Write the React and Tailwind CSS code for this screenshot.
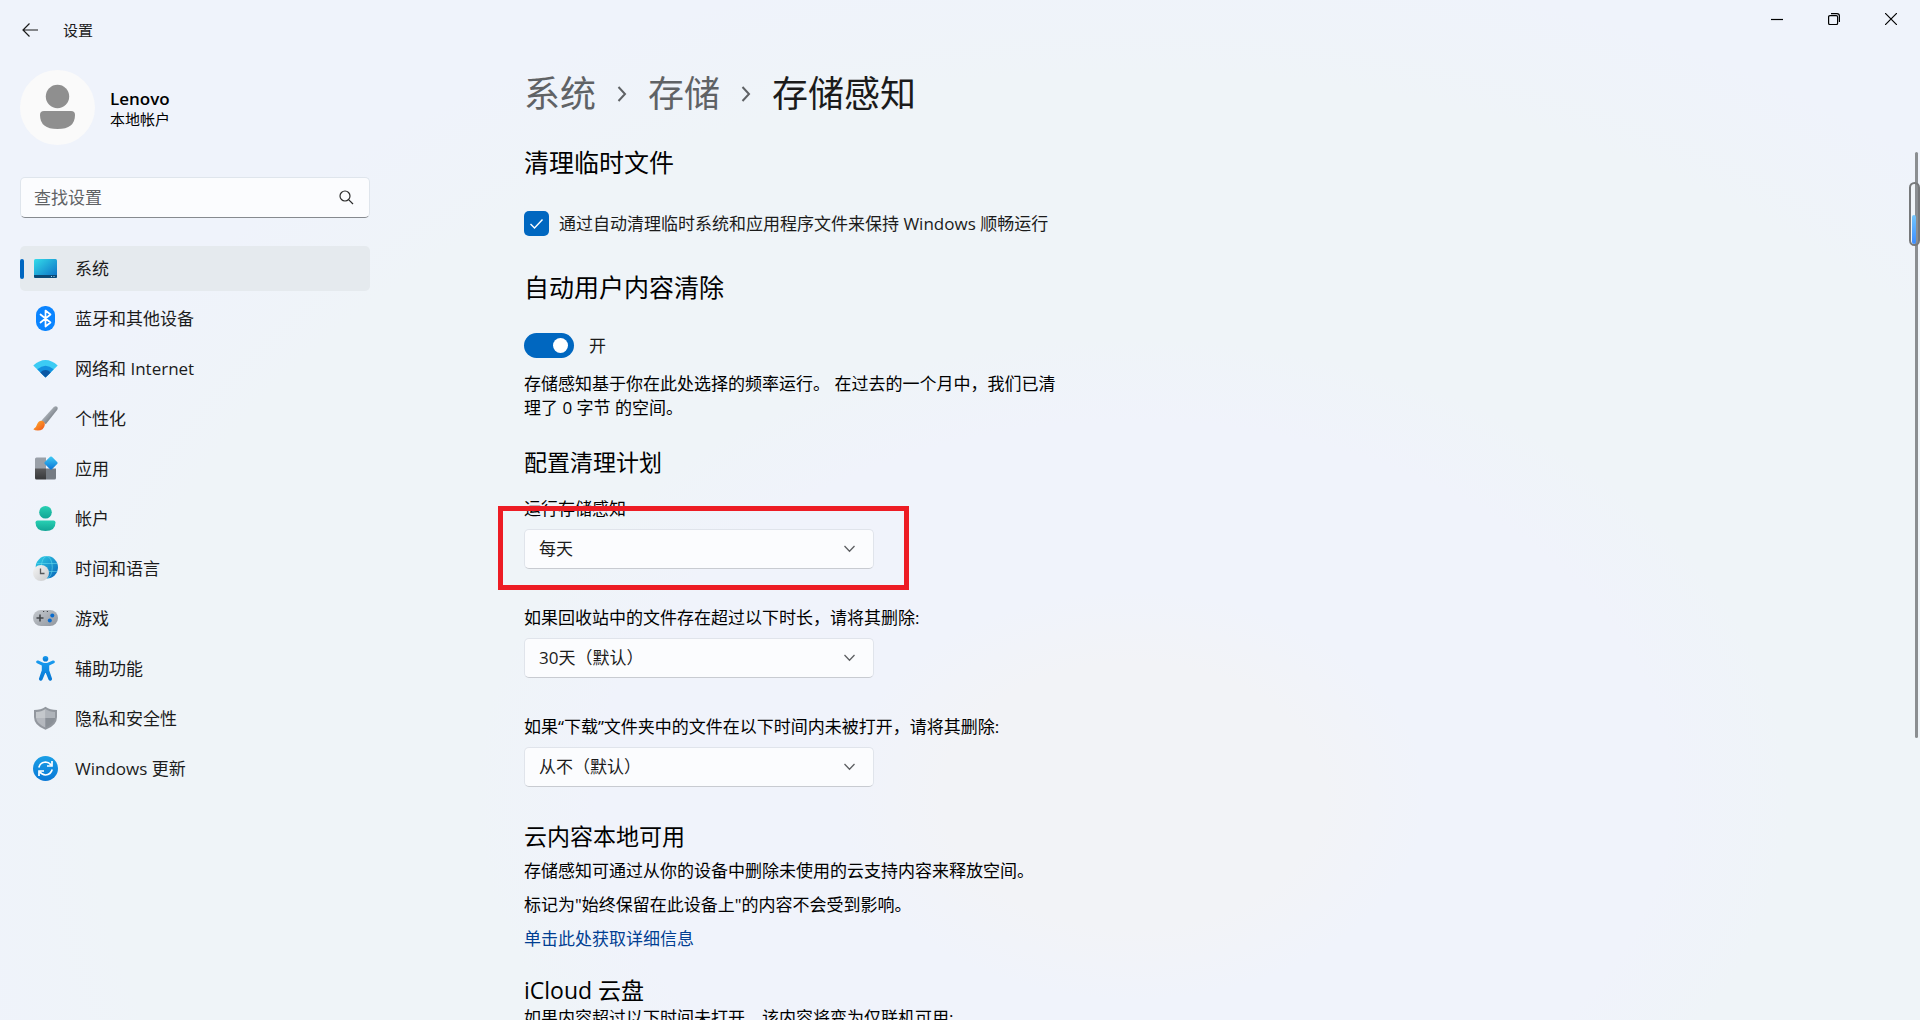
import { useState } from "react";

const SystemIcon = () => (
  <svg width="25" height="25" viewBox="0 0 25 25">
    <defs>
      <linearGradient id="sys" x1="0" y1="0" x2="1" y2="1">
        <stop offset="0" stopColor="#34dcea" />
        <stop offset="1" stopColor="#0a6cc4" />
      </linearGradient>
    </defs>
    <rect x="1" y="3" width="23" height="19" rx="1.500" fill="url(#sys)" />
    <path d="M1 19h23v1.500a1.500 1.500 0 0 1-1.500 1.500h-20a1.500 1.500 0 0 1-1.500-1.500z" fill="#0b4a77" />
    <path d="M18 20.500h1M20.500 20.500h1" stroke="#9fd6f2" />
  </svg>
);

const BluetoothIcon = () => (
  <svg width="25" height="25" viewBox="0 0 25 25">
    <rect x="3" y="0" width="19" height="25" rx="9" fill="#0a84ff" />
    <path d="M7.500 8.500l10 8-5 4V4.500l5 4-10 8" fill="none" stroke="#fff" strokeWidth="1.700" strokeLinejoin="round" strokeLinecap="round" />
  </svg>
);

const WifiIcon = () => (
  <svg width="25" height="25" viewBox="0 0 25 25">
    <path d="M.3 9.500Q12.500-1.500 24.700 9.500L12.500 21.500z" fill="#3ccbf4" />
    <path d="M4.300 13.300Q12.500 6 20.700 13.300L12.500 21.500z" fill="#1490df" />
    <path d="M7.300 16.400Q12.500 11.500 17.700 16.400L12.500 21.500z" fill="#0b57a4" />
  </svg>
);

const BrushIcon = () => (
  <svg width="25" height="25" viewBox="0 0 25 25">
    <defs>
      <linearGradient id="handle" x1="0" y1="0" x2="1" y2="1">
        <stop offset="0.300" stopColor="#b4bac1" />
        <stop offset="0.700" stopColor="#737a82" />
      </linearGradient>
      <linearGradient id="tip" x1="0" y1="0" x2="1" y2="1">
        <stop offset="0" stopColor="#ffb52e" />
        <stop offset="1" stopColor="#f0521c" />
      </linearGradient>
    </defs>
    <path d="M8.500 14.500L20.800 1q2-1.600 3.300-.2 1.200 1.300 0 3.200L12.800 18.300z" fill="url(#handle)" />
    <path d="M4 18.500q1.300-4 4.800-3.800 3.400.8 3 4.300-1 5.500-7 5.500-3 0-4.500-1.300Q3.200 22 4 18.500z" fill="url(#tip)" />
  </svg>
);

const AppsIcon = () => (
  <svg width="25" height="25" viewBox="0 0 25 25">
    <defs>
      <linearGradient id="diamond" x1="0" y1="0" x2="1" y2="1">
        <stop offset="0" stopColor="#42cdf5" />
        <stop offset="1" stopColor="#0871d5" />
      </linearGradient>
      <linearGradient id="dark" x1="0" y1="0" x2="0" y2="1">
        <stop offset="0" stopColor="#59595b" />
        <stop offset="1" stopColor="#37383a" />
      </linearGradient>
    </defs>
    <path d="M3.500 1.500H13V13H2V3q0-1.500 1.500-1.500z" fill="#9aa0a8" />
    <path d="M2 12.500h11v11H3.500Q2 23.500 2 22z" fill="url(#dark)" />
    <path d="M13 12.500h10V22q0 1.500-1.500 1.500H13z" fill="#757b83" />
    <rect x="13" y="2" width="10" height="10" rx="1.300" transform="rotate(45 18 7)" fill="url(#diamond)" />
  </svg>
);

const AccountIcon = () => (
  <svg width="25" height="25" viewBox="0 0 25 25">
    <defs>
      <linearGradient id="acct" x1="0" y1="0" x2="0" y2="1">
        <stop offset="0" stopColor="#28d0b3" />
        <stop offset="1" stopColor="#12a595" />
      </linearGradient>
    </defs>
    <circle cx="12.500" cy="6.300" r="6.300" fill="url(#acct)" />
    <path d="M4.500 14.500h16q2 0 2 2 0 8.500-10 8.500t-10-8.500q0-2 2-2z" fill="url(#acct)" />
  </svg>
);

const TimeIcon = () => (
  <svg width="25" height="25" viewBox="0 0 25 25">
    <defs>
      <linearGradient id="globe" x1="0" y1="0" x2="1" y2="1">
        <stop offset="0" stopColor="#30d1e8" />
        <stop offset="1" stopColor="#0863b8" />
      </linearGradient>
      <linearGradient id="clock" x1="0" y1="0" x2="1" y2="1">
        <stop offset="0" stopColor="#f5f5f5" />
        <stop offset="1" stopColor="#c9cacc" />
      </linearGradient>
    </defs>
    <circle cx="13.800" cy="11.300" r="11.200" fill="url(#globe)" />
    <g fill="none" stroke="#6fe3f2" strokeOpacity="0.500">
      <ellipse cx="13.800" cy="11.300" rx="5.500" ry="11" />
      <path d="M4 7.500h20M4 15.500h20" />
    </g>
    <circle cx="8" cy="17" r="8" fill="url(#clock)" />
    <path d="M7.500 12.500V17.500h4" fill="none" stroke="#55585c" strokeWidth="1.300" />
  </svg>
);

const GameIcon = () => (
  <svg width="25" height="25" viewBox="0 0 25 25">
    <defs>
      <linearGradient id="pad" x1="0" y1="0" x2="1" y2="1">
        <stop offset="0" stopColor="#c5c9ce" />
        <stop offset="1" stopColor="#90969e" />
      </linearGradient>
    </defs>
    <rect x="0" y="4" width="25" height="16" rx="8" fill="url(#pad)" />
    <path d="M7 8.500v7M3.500 12h7" stroke="#44474b" strokeWidth="1.600" />
    <path d="M10 5.500h1.200M13.800 5.500H15" stroke="#44474b" strokeWidth="1.200" />
    <circle cx="19.300" cy="9.500" r="2" fill="#0a6cce" />
    <circle cx="16.800" cy="14.500" r="2" fill="#0a6cce" />
  </svg>
);

const AccessIcon = () => (
  <svg width="25" height="25" viewBox="0 0 25 25">
    <defs>
      <linearGradient id="man" x1="0" y1="0" x2="0" y2="1">
        <stop offset="0" stopColor="#1a9cf0" />
        <stop offset="1" stopColor="#0776d2" />
      </linearGradient>
    </defs>
    <circle cx="12.500" cy="2.800" r="2.800" fill="url(#man)" />
    <path d="M3.300 5.200q.7-1.200 2-.6l5 2.100q2.200.7 4.400 0l5-2.100q1.300-.6 2 .6.500 1.400-.8 2l-4.700 2.200v4.800l2.800 8.300q.3 1.700-1.200 2.300-1.500.3-2.200-1L12.800 17h-.6l-2.800 6.800q-.7 1.300-2.200 1Q5.700 24.200 6 22.500l2.800-8.300V9.400L4.100 7.200q-1.300-.6-.8-2z" fill="url(#man)" />
  </svg>
);

const ShieldIcon = () => (
  <svg width="25" height="25" viewBox="0 0 25 25">
    <path d="M12.500.8Q17 4 24 4v7q0 8.500-11.500 12.800Q1 19.500 1 11V4q7 0 11.500-3.200z" fill="#92979e" />
    <path d="M12.500 3Q16.500 6 22 6v6H12.500z" fill="#afb4ba" />
    <path d="M12.500 3Q8.500 6 3 6v6h9.500z" fill="#c4c8cc" />
    <path d="M3 12h9.500v9.500Q4 18 3 12z" fill="#b4b8be" />
    <path d="M22 12h-9.500v9.500Q21 18 22 12z" fill="#8a9097" />
  </svg>
);

const UpdateIcon = () => (
  <svg width="25" height="25" viewBox="0 0 25 25">
    <defs>
      <linearGradient id="upd" x1="0" y1="0" x2="0" y2="1">
        <stop offset="0" stopColor="#1a9fe6" />
        <stop offset="1" stopColor="#0978d6" />
      </linearGradient>
    </defs>
    <circle cx="12.500" cy="12.500" r="12.500" fill="url(#upd)" />
    <g fill="none" stroke="#fff" strokeWidth="1.700">
      <path d="M5.800 11.500q1.500-5.200 6.700-5.500 3.500.2 5.800 3.300" />
      <path d="M19.200 13.500q-1.500 5.200-6.700 5.500-3.500-.2-5.800-3.300" />
      <path d="M19 5v5h-5M6 20v-5h5" />
    </g>
  </svg>
);

const NAV = [
  { label: "系统", Icon: SystemIcon },
  { label: "蓝牙和其他设备", Icon: BluetoothIcon },
  { label: "网络和 Internet", Icon: WifiIcon },
  { label: "个性化", Icon: BrushIcon },
  { label: "应用", Icon: AppsIcon },
  { label: "帐户", Icon: AccountIcon },
  { label: "时间和语言", Icon: TimeIcon },
  { label: "游戏", Icon: GameIcon },
  { label: "辅助功能", Icon: AccessIcon },
  { label: "隐私和安全性", Icon: ShieldIcon },
  { label: "Windows 更新", Icon: UpdateIcon },
];

function TitleBar() {
  return (
    <header className="flex h-[62px] items-start justify-between">
      <div className="flex h-[60px] items-center pl-[22px]">
        <button type="button" aria-label="返回" className="mr-[25px]">
          <svg width="16" height="14" viewBox="0 0 16 14" fill="none" stroke="#1b1b1b" strokeWidth="1.200">
            <path d="M7.500.5L1 7l6.500 6.500M1 7h15" />
          </svg>
        </button>
        <span className="text-[15px]">设置</span>
      </div>
      <div className="flex h-[38px] pr-px">
        <button type="button" aria-label="最小化" className="flex w-[57px] items-center justify-center">
          <svg width="12" height="12" viewBox="0 0 12 12" stroke="#000" strokeWidth="1.200">
            <path d="M0 6.500h12" />
          </svg>
        </button>
        <button type="button" aria-label="还原" className="flex w-[57px] items-center justify-center">
          <svg width="12" height="12" viewBox="0 0 12 12" fill="none" stroke="#000" strokeWidth="1.200">
            <rect x="0.600" y="2.600" width="9" height="9" rx="1.300" />
            <path d="M3 .6h6q2.400 0 2.400 2.400v6" />
          </svg>
        </button>
        <button type="button" aria-label="关闭" className="flex w-[57px] items-center justify-center">
          <svg width="12" height="12" viewBox="0 0 12 12" stroke="#000" strokeWidth="1.200">
            <path d="M0 0l12 12M12 0L0 12" />
          </svg>
        </button>
      </div>
    </header>
  );
}

function Sidebar() {
  return (
    <aside className="w-[350px] shrink-0">
      <div className="flex items-center gap-[15px]">
        <svg width="75" height="75" viewBox="0 0 75 75">
          <circle cx="37.500" cy="37.500" r="37.500" fill="#fafafa" />
          <circle cx="37.500" cy="26.500" r="11.700" fill="#8f8f8f" />
          <path d="M24 41h27q4 0 4 4 0 14-17.500 14T20 45q0-4 4-4z" fill="#8f8f8f" />
        </svg>
        <div className="pt-[2px]">
          <p className="text-[17px] leading-5 font-semibold text-black">Lenovo</p>
          <p className="text-[15px] leading-5 text-black">本地帐户</p>
        </div>
      </div>

      <div className="relative mt-8">
        <input
          type="text"
          aria-label="查找设置"
          placeholder="查找设置"
          className="block h-[41px] w-full rounded-[5px] border border-[#dfe5ec] border-b-[#868a8f] bg-[#fbfcfe] pr-10 pl-[13px] text-[17px] placeholder:text-[#606265]"
        />
        <svg className="absolute top-[13px] right-4" width="15" height="15" viewBox="0 0 15 15" fill="none" stroke="#2b2b2b" strokeWidth="1.200">
          <circle cx="6" cy="6" r="5" />
          <path d="M9.600 9.600L14 14" />
        </svg>
      </div>

      <nav className="mt-7 flex flex-col gap-[5px]">
        {NAV.map(({ label, Icon }, i) => (
          <a
            key={label}
            href="#"
            className={`relative flex h-[45px] items-center gap-[17px] rounded-[5px] pl-[13px] text-[17px] ${
              i === 0 ? "bg-[#e5eaee]" : ""
            }`}
          >
            {i === 0 && <span className="absolute left-0 h-5 w-1 rounded-full bg-[#0067c0]" />}
            <Icon />
            {label}
          </a>
        ))}
      </nav>
    </aside>
  );
}

function Crumb() {
  return (
    <span className="flex w-[52px] justify-center">
      <svg width="10" height="16" viewBox="0 0 10 16" fill="none" stroke="#5f6265" strokeWidth="2">
        <path d="M1.500 1l6.500 7-6.500 7" />
      </svg>
    </span>
  );
}

function SelectField({ id, label, value, framed }) {
  return (
    <div>
      <label htmlFor={id} className="block w-max text-[17px] leading-6 text-black">
        {label}
      </label>
      <div className="relative mt-2 w-[350px]">
        <select
          id={id}
          className="block h-10 w-full appearance-none rounded-[5px] border border-[#e0e4eb] border-b-[#c8cbd1] bg-[#fbfcfe] pr-10 pl-[14px] text-[17px]"
        >
          <option>{value}</option>
        </select>
        <svg className="pointer-events-none absolute top-4 right-[19px]" width="11" height="8" viewBox="0 0 11 8" fill="none" stroke="#5d5f62" strokeWidth="1.300">
          <path d="M.5 1l5 5.200 5-5.200" />
        </svg>
        {framed && (
          <div className="pointer-events-none absolute -top-[23px] -right-[35px] -bottom-[21px] -left-[26px] border-5 border-[#ed1c24]" />
        )}
      </div>
    </div>
  );
}

function ScrollIndicator() {
  return (
    <div className="absolute top-[152px] right-0 h-[586px] w-[11px]">
      <div className="absolute right-[2px] h-full w-[3px] rounded-full bg-[#8b8e91]" />
      <div className="absolute top-[30px] right-0 flex h-16 w-[11px] items-end rounded-full border-2 border-[#77797b] bg-gradient-to-r from-[#f0f4f8] from-55% to-[#8b8e91] to-60%">
        <div className="ml-px h-[29px] w-1 rounded-sm bg-gradient-to-b from-[#74c6fb] to-[#3c8cff]" />
      </div>
    </div>
  );
}

export default function App() {
  const [autoClean, setAutoClean] = useState(true);
  const [enabled, setEnabled] = useState(true);

  return (
    <div
      lang="zh-CN"
      className="relative h-screen overflow-hidden bg-[#eff3fb] bg-[radial-gradient(90%_118%_at_59%_78%,#f2f3f7_11%,#f0f3fb_17%,#f0f3fb_31%,#eff4f8_38%,#eff4f8_60%,#eff3fb_70%)] font-['Open_Sans','Noto_Sans_CJK_SC',sans-serif] text-[#1b1b1b]"
    >
      <TitleBar />
      <div className="flex gap-[154px] pt-2 pl-5">
        <Sidebar />

        <main className="min-w-0 flex-1">
          <h1 className="flex items-center text-4xl leading-12">
            <a href="#" className="text-[#5f6265]">系统</a>
            <Crumb />
            <a href="#" className="text-[#5f6265]">存储</a>
            <Crumb />
            <span>存储感知</span>
          </h1>

          <h2 className="mt-7 text-[25px] leading-8 text-black">清理临时文件</h2>
          <label className="mt-[33px] flex w-max items-center gap-[10px] text-[17px] leading-6">
            <span className="relative flex">
              <input
                type="checkbox"
                checked={autoClean}
                onChange={(e) => setAutoClean(e.target.checked)}
                className="size-[25px] appearance-none rounded-[5px] border border-[#868a8f] checked:border-0 checked:bg-[#0067c0]"
              />
              <svg className="pointer-events-none absolute inset-0" width="25" height="25" viewBox="0 0 25 25" fill="none" stroke="#fff" strokeWidth="1.400">
                <path d="M6.500 13l4 4 8-8.500" />
              </svg>
            </span>
            通过自动清理临时系统和应用程序文件来保持 Windows 顺畅运行
          </label>

          <h2 className="mt-[35px] text-[25px] leading-8 text-black">自动用户内容清除</h2>
          <label className="mt-[30px] flex w-max items-center gap-[15px] text-[17px] leading-6">
            <span className="relative flex">
              <input
                type="checkbox"
                role="switch"
                checked={enabled}
                onChange={(e) => setEnabled(e.target.checked)}
                className="h-[25px] w-[50px] appearance-none rounded-full bg-[#0067c0]"
              />
              <span className="pointer-events-none absolute top-[5px] right-[6px] size-[15px] rounded-full bg-white" />
            </span>
            开
          </label>
          <p className="mt-[14px] w-[545px] text-[17px] leading-6 text-black">
            存储感知基于你在此处选择的频率运行。 在过去的一个月中，我们已清理了 0 字节 的空间。
          </p>

          <h3 className="mt-[27px] mb-5 text-[23px] leading-[30px] text-black">配置清理计划</h3>
          <div className="flex flex-col gap-[37px]">
            <SelectField id="run" label="运行存储感知" value="每天" framed />
            <SelectField id="recycle" label="如果回收站中的文件存在超过以下时长，请将其删除:" value="30天（默认）" />
            <SelectField id="downloads" label="如果“下载”文件夹中的文件在以下时间内未被打开，请将其删除:" value="从不（默认）" />
          </div>

          <h3 className="mt-[34px] text-[23px] leading-[30px] text-black">云内容本地可用</h3>
          <div className="mt-2 flex flex-col items-start gap-[10px] text-[17px] leading-6 text-black">
            <p>存储感知可通过从你的设备中删除未使用的云支持内容来释放空间。</p>
            <p>标记为"始终保留在此设备上"的内容不会受到影响。</p>
            <a href="#" className="text-[#003e92]">单击此处获取详细信息</a>
          </div>

          <h3 className="mt-6 text-[23px] leading-[30px] text-black">iCloud 云盘</h3>
          <p className="mt-px text-[17px] leading-6 text-black">如果内容超过以下时间未打开，该内容将变为仅联机可用:</p>
        </main>
      </div>
      <ScrollIndicator />
    </div>
  );
}
